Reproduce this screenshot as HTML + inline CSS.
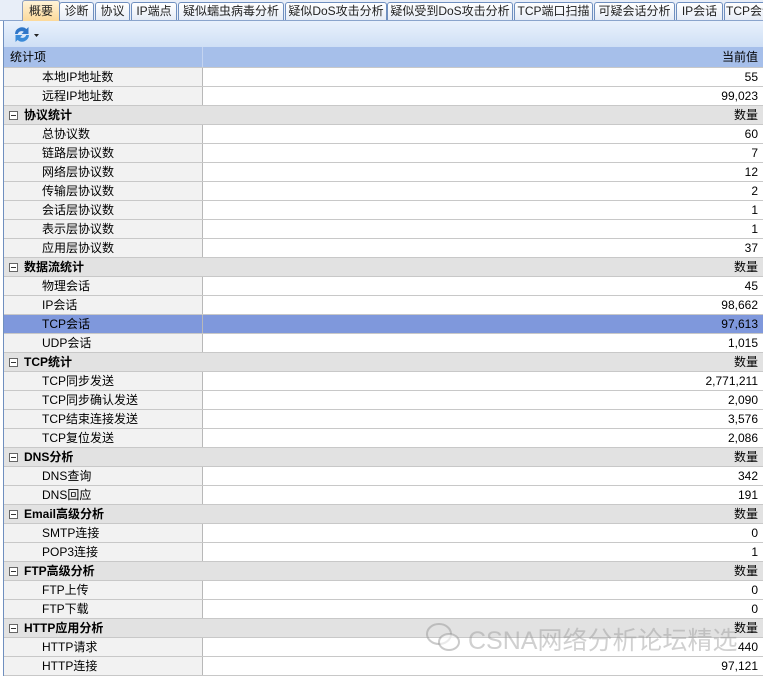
<!DOCTYPE html>
<html><head><meta charset="utf-8"><style>
body{margin:0;width:763px;height:676px;overflow:hidden;background:#fff;font-family:"Liberation Sans","Noto Sans CJK SC",sans-serif;font-size:12px;color:#000;position:relative}
#tabs{position:absolute;left:0;top:0;width:763px;height:20px;background:#e8eef8;border-bottom:1px solid #8aa4cc}
.tab{position:absolute;top:2px;height:17px;line-height:17px;border:1px solid #6f8fbf;border-bottom:none;border-radius:3px 3px 0 0;background:linear-gradient(#fff,#e6ecf6);text-align:center;font-size:12px;color:#222}
.tab.act{top:0;height:20px;line-height:20px;background:linear-gradient(#fff3d8,#fcd99a);border-color:#8b9dbd}
#tool{position:absolute;left:3px;top:21px;width:760px;height:26px;background:linear-gradient(#e9f1fc,#cfdff5);border-left:1px solid #6f8fbf}
#grid{position:absolute;left:3px;top:47px;width:760px;border-left:1px solid #6f8fbf}
.r{height:18px;line-height:18px;border-bottom:1px solid #c8c8c8;position:relative;background:#fff}
.r .l{position:absolute;left:0;top:0;width:199px;height:18px;background:#f2f2f2;border-right:1px solid #b8b8b8;padding-left:38px;box-sizing:border-box}
.r .v{position:absolute;right:6px;top:0}
.h{background:#a6bfea;height:20px;line-height:20px}
.h .l{background:#a6bfea;padding-left:6px;border-right:1px solid #c4d4f0;height:20px}
.g{background:#e2e2e2;font-weight:bold}
.g .l{background:#e2e2e2;border-right:none;padding-left:20px}
.g .l:before{content:"";position:absolute;left:5px;top:5px;width:7px;height:7px;border:1px solid #666;background:#fff}
.g .l:after{content:"";position:absolute;left:7px;top:9px;width:5px;height:1px;background:#333}
.g .v{font-weight:normal}
.s,.s .l{background:#7f98dc}
</style></head><body>
<div id="tabs">
<div class="tab act" style="left:22px;width:36px">概要</div>
<div class="tab" style="left:59px;width:33px">诊断</div>
<div class="tab" style="left:95px;width:33px">协议</div>
<div class="tab" style="left:131px;width:44px">IP端点</div>
<div class="tab" style="left:178px;width:104px">疑似蠕虫病毒分析</div>
<div class="tab" style="left:285px;width:100px">疑似DoS攻击分析</div>
<div class="tab" style="left:387px;width:124px">疑似受到DoS攻击分析</div>
<div class="tab" style="left:514px;width:77px">TCP端口扫描</div>
<div class="tab" style="left:594px;width:79px">可疑会话分析</div>
<div class="tab" style="left:676px;width:45px">IP会话</div>
<div class="tab" style="left:724px;width:50px">TCP会话</div>
</div>
<div id="tool"><svg width="40" height="25" style="position:absolute;left:8px;top:1px"><path d="M3 12a7 7 0 0 1 11.5-5l2-2v7h-7l2.3-2.3a4 4 0 0 0-6 2.3z" fill="#2f76c8"/><path d="M17 13a7 7 0 0 1-11.5 5l-2 2v-7h7l-2.3 2.3a4 4 0 0 0 6-2.3z" fill="#3a8ad8"/><path d="M22 12h5l-2.5 3z" fill="#222"/></svg></div>
<div id="grid">
<div class="r h"><div class="l">统计项</div><div class="v">当前值</div></div>
<div class="r"><div class="l">本地IP地址数</div><div class="v">55</div></div>
<div class="r"><div class="l">远程IP地址数</div><div class="v">99,023</div></div>
<div class="r g"><div class="l">协议统计</div><div class="v">数量</div></div>
<div class="r"><div class="l">总协议数</div><div class="v">60</div></div>
<div class="r"><div class="l">链路层协议数</div><div class="v">7</div></div>
<div class="r"><div class="l">网络层协议数</div><div class="v">12</div></div>
<div class="r"><div class="l">传输层协议数</div><div class="v">2</div></div>
<div class="r"><div class="l">会话层协议数</div><div class="v">1</div></div>
<div class="r"><div class="l">表示层协议数</div><div class="v">1</div></div>
<div class="r"><div class="l">应用层协议数</div><div class="v">37</div></div>
<div class="r g"><div class="l">数据流统计</div><div class="v">数量</div></div>
<div class="r"><div class="l">物理会话</div><div class="v">45</div></div>
<div class="r"><div class="l">IP会话</div><div class="v">98,662</div></div>
<div class="r s"><div class="l">TCP会话</div><div class="v">97,613</div></div>
<div class="r"><div class="l">UDP会话</div><div class="v">1,015</div></div>
<div class="r g"><div class="l">TCP统计</div><div class="v">数量</div></div>
<div class="r"><div class="l">TCP同步发送</div><div class="v">2,771,211</div></div>
<div class="r"><div class="l">TCP同步确认发送</div><div class="v">2,090</div></div>
<div class="r"><div class="l">TCP结束连接发送</div><div class="v">3,576</div></div>
<div class="r"><div class="l">TCP复位发送</div><div class="v">2,086</div></div>
<div class="r g"><div class="l">DNS分析</div><div class="v">数量</div></div>
<div class="r"><div class="l">DNS查询</div><div class="v">342</div></div>
<div class="r"><div class="l">DNS回应</div><div class="v">191</div></div>
<div class="r g"><div class="l">Email高级分析</div><div class="v">数量</div></div>
<div class="r"><div class="l">SMTP连接</div><div class="v">0</div></div>
<div class="r"><div class="l">POP3连接</div><div class="v">1</div></div>
<div class="r g"><div class="l">FTP高级分析</div><div class="v">数量</div></div>
<div class="r"><div class="l">FTP上传</div><div class="v">0</div></div>
<div class="r"><div class="l">FTP下载</div><div class="v">0</div></div>
<div class="r g"><div class="l">HTTP应用分析</div><div class="v">数量</div></div>
<div class="r"><div class="l">HTTP请求</div><div class="v">440</div></div>
<div class="r"><div class="l">HTTP连接</div><div class="v">97,121</div></div>
</div>
<svg width="40" height="34" style="position:absolute;left:424px;top:620px"><ellipse cx="15" cy="14" rx="12" ry="10" fill="none" stroke="rgba(150,150,150,0.5)" stroke-width="2"/><ellipse cx="25" cy="22" rx="10" ry="8" fill="rgba(255,255,255,0.6)" stroke="rgba(150,150,150,0.5)" stroke-width="2"/></svg>
<div style="position:absolute;left:468px;top:621px;font-size:25px;color:rgba(150,150,150,0.45);white-space:nowrap">CSNA网络分析论坛精选</div>
</body></html>
